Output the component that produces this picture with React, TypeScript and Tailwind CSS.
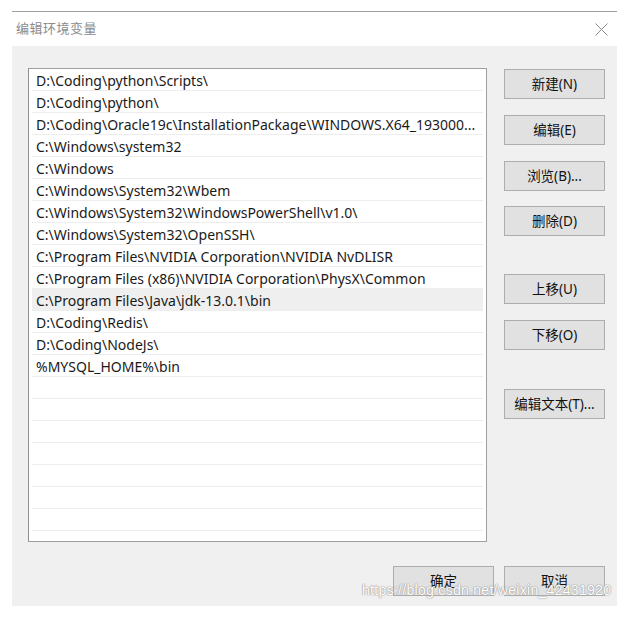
const paths = [
  "D:\\Coding\\python\\Scripts\\",
  "D:\\Coding\\python\\",
  "D:\\Coding\\Oracle19c\\InstallationPackage\\WINDOWS.X64_193000...",
  "C:\\Windows\\system32",
  "C:\\Windows",
  "C:\\Windows\\System32\\Wbem",
  "C:\\Windows\\System32\\WindowsPowerShell\\v1.0\\",
  "C:\\Windows\\System32\\OpenSSH\\",
  "C:\\Program Files\\NVIDIA Corporation\\NVIDIA NvDLISR",
  "C:\\Program Files (x86)\\NVIDIA Corporation\\PhysX\\Common",
  "C:\\Program Files\\Java\\jdk-13.0.1\\bin",
  "D:\\Coding\\Redis\\",
  "D:\\Coding\\NodeJs\\",
  "%MYSQL_HOME%\\bin",
];

const SELECTED = 10;

const rows = [...paths, ...Array(8).fill("")];

const Btn = ({ label, className = "" }: { label: string; className?: string }) => (
  <div
    className={`w-[101px] h-[30px] flex items-center justify-center bg-[#e1e1e1] border border-[#adadad] text-[13.5px] text-[#111] ${className}`}
  >
    {label}
  </div>
);

const App = () => {
  return (
    <div className="relative w-[627px] h-[617px] bg-white overflow-hidden font-['Noto_Sans','Noto_Sans_CJK_SC',sans-serif]">
      <div className="pt-[11px] pl-[12px] pr-[10px]">
        <div className="border-t border-[#a0a0a0]" />
        <div className="h-[34px] flex items-center justify-between pl-[4px] pr-[9px]">
          <span className="text-[13px] text-[#8c8c8c] tracking-[0.5px]">编辑环境变量</span>
          <svg width="13" height="13" viewBox="0 0 13 13">
            <path d="M0.5 0.5 L12.5 12.5 M12.5 0.5 L0.5 12.5" stroke="#8a8a8a" strokeWidth="1" fill="none" />
          </svg>
        </div>
        <div className="h-[560px] bg-[#f0f0f0] flex flex-col pl-[16px] pr-[12px] pt-[22px]">
          <div className="flex gap-[17px]">
            <div className="w-[459px] h-[474px] bg-white border border-[#a0a0a0] border-l-[#8f8f8f] overflow-hidden">
              {rows.map((p, i) => (
                <div
                  key={i}
                  className={`h-[22px] mx-[3px] pl-[4px] pt-[1px] leading-[21px] text-[14px] text-[#1a1a1a] whitespace-nowrap border-b border-[#ededed] ${
                    i === SELECTED ? "bg-[#efefef]" : ""
                  }`}
                >
                  {p}
                </div>
              ))}
            </div>
            <div className="flex flex-col">
              <Btn label="新建(N)" className="mt-[1px]" />
              <Btn label="编辑(E)" className="mt-[16px]" />
              <Btn label="浏览(B)..." className="mt-[16px]" />
              <Btn label="删除(D)" className="mt-[15px]" />
              <Btn label="上移(U)" className="mt-[38px]" />
              <Btn label="下移(O)" className="mt-[16px]" />
              <Btn label="编辑文本(T)..." className="mt-[39px]" />
            </div>
          </div>
          <div className="flex justify-end gap-[10px] mt-[24px]">
            <Btn label="确定" />
            <Btn label="取消" />
          </div>
        </div>
      </div>
      <div className="absolute left-[362px] top-[580px] text-[14px] text-white tracking-[0.3px] font-['Liberation_Sans',sans-serif] [text-shadow:0_0_1px_#9a9a9a,0_0_1px_#9a9a9a,0_0_2px_#b0b0b0]">
        https://blog.csdn.net/weixin_42431920
      </div>
    </div>
  );
};

export default App;
